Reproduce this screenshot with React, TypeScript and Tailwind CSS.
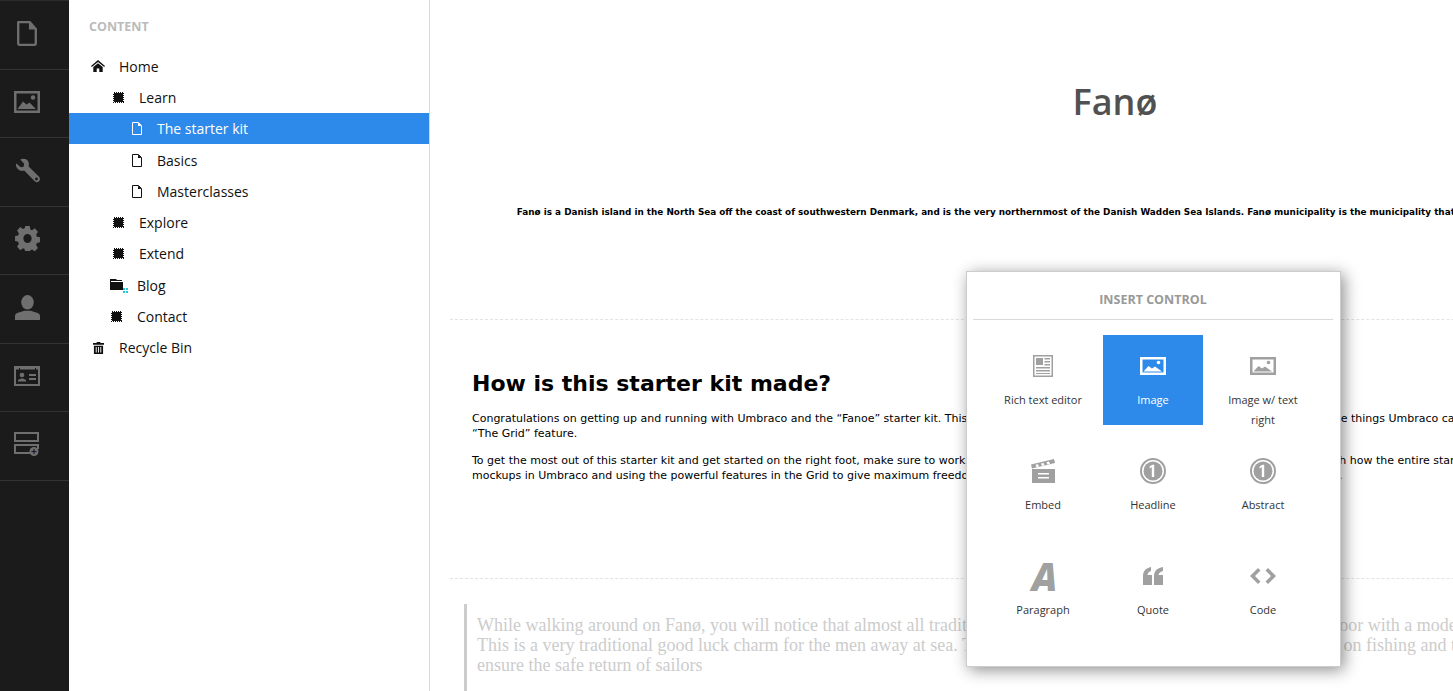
import React from "react";

type IP = { className?: string };

const FileIcon = ({ className }: IP) => (
  <svg viewBox="1.800 1.300 20.400 25.600" className={className} fill="none" stroke="currentColor" strokeWidth="2.400" strokeLinejoin="round">
    <path d="M3 2.500h12l6 7v15.200a1 1 0 0 1-1 1H4a1 1 0 0 1-1-1z" />
    <path d="M14 2v8h7z" fill="currentColor" stroke="none" />
  </svg>
);

const ImageIcon = ({ className }: IP) => (
  <svg viewBox="0 0 26 22" className={className}>
    <path fillRule="evenodd" fill="currentColor" d="M0 0h26v22H0zM2.500 2.500v17h21v-17z" />
    <circle cx="19" cy="6.500" r="2.200" fill="currentColor" />
    <path fill="currentColor" d="M3.500 18l5.500-7.500 3.500 3 3-2 6.500 6.500z" />
  </svg>
);

const ImageWideIcon = ({ className }: IP) => (
  <svg viewBox="0 0 26 18" className={className}>
    <path fillRule="evenodd" fill="currentColor" d="M0 0h26v18H0zM2.500 2.500v13h21v-13z" />
    <circle cx="18.500" cy="5.500" r="1.800" fill="currentColor" />
    <path fill="currentColor" d="M3.500 14.500l5-5.500 3.500 2.500 3-2 7 5z" />
  </svg>
);

const WrenchIcon = ({ className }: IP) => (
  <svg viewBox="0 0 26 26" className={className}>
    <path fill="currentColor" d="M1 5.500l5 4 3-.5 .5-3-4-4.500C8.500.2 12 .8 13.500 3c1.200 1.800 1.200 4 .5 5.500L25 19.500c1.300 1.400 1.200 3.500 0 4.700-1.300 1.300-3.300 1.200-4.500 0L9.500 13c-2 .8-4.500.4-6.200-1.200C1.500 10.200.7 7.700 1 5.500z" />
    <circle cx="22.300" cy="21.800" r="1.500" fill="#1b1b1b" />
  </svg>
);

const GearIcon = ({ className }: IP) => (
  <svg viewBox="0 0 24 24" className={className}>
    <path
      fill="currentColor"
      fillRule="evenodd"
      d="M9.600 0h4.800l.6 3.300 1.900.8 2.800-1.900 3.400 3.400-1.900 2.800.8 1.900 3.300.6v4.800l-3.300.6-.8 1.900 1.900 2.800-3.400 3.400-2.800-1.900-1.900.8-.6 3.300H9.600L9 22.100l-1.900-.8-2.800 1.900-3.400-3.400 1.900-2.800-.8-1.900L-1.300 14.500V9.700l3.300-.6.800-1.900-1.900-2.800 3.400-3.400 2.800 1.900 1.900-.8zM12 7.600a4.400 4.400 0 1 0 0 8.800 4.400 4.400 0 0 0 0-8.800z"
      transform="translate(1.200 0) scale(0.9 1)"
    />
  </svg>
);

const UserIcon = ({ className }: IP) => (
  <svg viewBox="0 0 24 24" className={className}>
    <ellipse cx="12" cy="7" rx="6" ry="7" fill="currentColor" />
    <path fill="currentColor" d="M0 24v-4c0-2 2-3 4.500-3.500L9 15h6l4.500 1.500C22 17 24 18 24 20v4z" />
  </svg>
);

const IdIcon = ({ className }: IP) => (
  <svg viewBox="0 0 26 20" className={className}>
    <path fill="currentColor" fillRule="evenodd" d="M0 0h26v20H0zM2 3.500V18h22V3.500h-2V2h-1v1.500H6V2H5v1.500z" />
    <circle cx="8" cy="9" r="2.300" fill="currentColor" />
    <path fill="currentColor" d="M4 15.500V14l3-1.500h2l3 1.500v1.500zM15 8h7v2h-7zM15 12h7v2h-7z" />
  </svg>
);

const LayoutAddIcon = ({ className }: IP) => (
  <svg viewBox="0 0 26 24" className={className}>
    <path fill="currentColor" fillRule="evenodd" d="M0 0h25v10H0zM2 2v6h21V2zM0 12h25v5h-2v-3H2v6h14v2H0z" />
    <circle cx="20" cy="19.500" r="4.500" fill="currentColor" />
    <path stroke="#1b1b2e" strokeWidth="1.200" d="M17.500 19.500h5M20 17v5" />
  </svg>
);

const HomeIcon = ({ className }: IP) => (
  <svg viewBox="0 0 14 12" className={className}>
    <path fill="currentColor" d="M7 0l7 6-.8 1L7 2 .8 7 0 6z" />
    <path fill="currentColor" d="M2.300 7L7 3.200 11.700 7v5H8.300V8.500H5.700V12H2.300z" />
  </svg>
);

const StampIcon = ({ className }: IP) => (
  <svg viewBox="0 0 11 11" className={className} shapeRendering="crispEdges">
    <rect x="0.500" y="0.500" width="10" height="10" fill="none" stroke="currentColor" strokeDasharray="1 1" />
    <rect x="1" y="1" width="9" height="9" fill="currentColor" />
  </svg>
);

const SmallFile = ({ className }: IP) => (
  <svg viewBox="0 0 10 13" className={className} fill="none" stroke="currentColor">
    <path d="M.5.500h6l3 3v9h-9z" />
    <path d="M6 .5v3.500h3.500z" fill="currentColor" stroke="none" />
  </svg>
);

const FolderIcon = ({ className }: IP) => (
  <svg viewBox="0 0 20 15" className={className}>
    <path fill="currentColor" d="M0 1h6l1 1h5v1H1v1h12v8H0z" />
    <path stroke="#22c7d6" strokeWidth="2" strokeDasharray="2 1" d="M13 11h6M13 14h6" />
  </svg>
);

const TrashIcon = ({ className }: IP) => (
  <svg viewBox="0 0 12 13" className={className}>
    <path fill="currentColor" d="M4 0h4v1h4v2H0V1h4z" />
    <path fill="currentColor" fillRule="evenodd" d="M1 4h10v9H1zM3 5.500v6h1v-6zM5.500 5.500v6h1v-6zM8 5.500v6h1v-6z" />
  </svg>
);

const RteIcon = ({ className }: IP) => (
  <svg viewBox="0 0 20 22" className={className}>
    <path fill="currentColor" fillRule="evenodd" d="M0 0h20v22H0zM1.500 1.500v19h17v-19z" />
    <path fill="currentColor" d="M3 3h7v7H3zM11.500 3H17v1.500h-5.500zM11.500 6H17v1.500h-5.500zM11.500 9H17v1.500h-5.500zM3 12h14v1.500H3zM3 15h14v1.500H3zM3 18h14v1H3z" />
  </svg>
);

const ClapIcon = ({ className }: IP) => (
  <svg viewBox="0 0 24 24" className={className}>
    <path fill="currentColor" d="M0 5.500L23 0l1 4L1 9.500z" />
    <path fill="#fff" d="M4.500 5.800l2.500-.6 1 2.400-2.500.6zM10 4.500l2.500-.6 1 2.400-2.500.6zM15.500 3.200l2.500-.6 1 2.400-2.500.6z" />
    <path fill="currentColor" d="M1 10h23v14H1z" />
    <path fill="#fff" d="M7 14h11v1.500H7zM7 18h11v1.500H7z" />
  </svg>
);

const CircleOne = ({ className }: IP) => (
  <svg viewBox="0 0 26 26" className={className}>
    <circle cx="13" cy="13" r="12" fill="none" stroke="currentColor" strokeWidth="2" />
    <circle cx="13" cy="13" r="9.500" fill="currentColor" />
    <path fill="#fff" d="M11.800 19V9.200L9.600 10.500V8.500l2.800-1.700h1.800V19z" />
  </svg>
);

const QuoteIcon = ({ className }: IP) => (
  <svg viewBox="0 0 20 18" className={className}>
    <path fill="currentColor" d="M0 18V9C0 4 3 1 8 0v4C5.500 5 4.500 6.500 4.500 8H9v10zM11 18V9c0-5 3-8 9-9v4c-3 1-4.500 2.500-4.500 4H20v10z" />
  </svg>
);

const CodeIcon = ({ className }: IP) => (
  <svg viewBox="0 0 26 16" className={className}>
    <path fill="currentColor" d="M8 0l2.500 2.500L5 8l5.500 5.500L8 16 0 8zM18 0l8 8-8 8-2.500-2.500L21 8l-5.500-5.500z" />
  </svg>
);

const rail = [
  { I: FileIcon, c: "w-[20px] h-[25px]" },
  { I: ImageIcon, c: "w-[26px] h-[22px]" },
  { I: WrenchIcon, c: "w-[25px] h-[25px]" },
  { I: GearIcon, c: "w-[25px] h-[25px]" },
  { I: UserIcon, c: "w-[25px] h-[25px]" },
  { I: IdIcon, c: "w-[26px] h-[20px]" },
  { I: LayoutAddIcon, c: "w-[26px] h-[24px]" },
];

const tree = [
  { t: "Home", I: HomeIcon, pl: "pl-[22px]", ic: "w-[14px] h-[12px]", gap: "w-[14px]" },
  { t: "Learn", I: StampIcon, pl: "pl-[44px]", ic: "w-[11px] h-[11px]", gap: "w-[15px]" },
  { t: "The starter kit", I: SmallFile, pl: "pl-[63px]", ic: "w-[10px] h-[13px]", gap: "w-[15px]", active: true },
  { t: "Basics", I: SmallFile, pl: "pl-[63px]", ic: "w-[10px] h-[13px]", gap: "w-[15px]" },
  { t: "Masterclasses", I: SmallFile, pl: "pl-[63px]", ic: "w-[10px] h-[13px]", gap: "w-[15px]" },
  { t: "Explore", I: StampIcon, pl: "pl-[44px]", ic: "w-[11px] h-[11px]", gap: "w-[15px]" },
  { t: "Extend", I: StampIcon, pl: "pl-[44px]", ic: "w-[11px] h-[11px]", gap: "w-[15px]" },
  { t: "Blog", I: FolderIcon, pl: "pl-[41px]", ic: "w-[20px] h-[15px]", gap: "w-[7px]" },
  { t: "Contact", I: StampIcon, pl: "pl-[42px]", ic: "w-[11px] h-[11px]", gap: "w-[15px]" },
  { t: "Recycle Bin", I: TrashIcon, pl: "pl-[24px]", ic: "w-[11px] h-[12px]", gap: "w-[15px]" },
];

const controls = [
  { t: "Rich text editor", I: RteIcon, c: "w-[20px] h-[22px]" },
  { t: "Image", I: ImageWideIcon, c: "w-[26px] h-[18px]", active: true },
  { t: "Image w/ text right", I: ImageWideIcon, c: "w-[26px] h-[18px]" },
  { t: "Embed", I: ClapIcon, c: "w-[24px] h-[24px]" },
  { t: "Headline", I: CircleOne, c: "w-[26px] h-[26px]" },
  { t: "Abstract", I: CircleOne, c: "w-[26px] h-[26px]" },
  { t: "Paragraph", I: null, c: "" },
  { t: "Quote", I: QuoteIcon, c: "w-[20px] h-[18px]" },
  { t: "Code", I: CodeIcon, c: "w-[26px] h-[16px]" },
];

export default function App() {
  return (
    <div className="relative flex h-[691px] w-[1453px] overflow-hidden bg-white font-['Open_Sans',sans-serif]">
      <nav className="w-[69px] shrink-0 bg-[#1b1b1b] text-[#6f6f6f] border-t border-[#2c2c2c]">
        {rail.map(({ I, c }, i) => (
          <div key={i} className="flex h-[68.5px] items-center justify-center border-b border-[#333333] pr-[15px] pb-[3px]">
            <I className={c} />
          </div>
        ))}
      </nav>

      <aside className="w-[361px] shrink-0 border-r border-[#d9d9d9]">
        <div className="pl-[20px] pt-[19px] h-[50.7px] text-[12.5px] leading-[16px] font-bold text-[#bbbbbb]">CONTENT</div>
        <ul>
          {tree.map(({ t, I, pl, ic, gap, active }) => (
            <li
              key={t}
              className={`flex h-[31.25px] items-center text-[14px] ${pl} ${active ? "bg-[#2e8aea] text-white" : "text-[#111111]"}`}
            >
              <span className="flex w-auto items-center">
                <I className={ic} />
              </span>
              <span className={`shrink-0 ${gap}`} />
              <span>{t}</span>
            </li>
          ))}
        </ul>
      </aside>

      <main className="min-w-0 flex-1 overflow-hidden">
        <div className="w-[1370px]">
          <h1 className="pt-[77px] text-center text-[36px] leading-[50px] font-semibold text-[#515151]">Fanø</h1>
          <p className="mt-[78px] whitespace-nowrap text-center font-['DejaVu_Sans',sans-serif] text-[8.85px] leading-[14px] font-bold text-black">
            Fanø is a Danish island in the North Sea off the coast of southwestern Denmark, and is the very northernmost of the Danish Wadden Sea Islands. Fanø municipality is the municipality that covers the entire island, and all of its major towns.
          </p>
          <div className="ml-[20px] mt-[100px] border-t border-dashed border-[#e3e3e3]" />
          <section className="pl-[42px] pt-[50px] font-['DejaVu_Sans',sans-serif] text-black">
            <h2 className="text-[22px] leading-[27px] font-bold">How is this starter kit made?</h2>
            <p className="mt-[14px] whitespace-nowrap text-[11px] leading-[15.4px]">
              Congratulations on getting up and running with Umbraco and the “Fanoe” starter kit. This starter kit is made to show off some of the really useful and so large things Umbraco can do, and especially
              <br />
              “The Grid” feature.
            </p>
            <p className="mt-[11px] whitespace-nowrap text-[11px] leading-[15.4px]">
              To get the most out of this starter kit and get started on the right foot, make sure to work your way through the many valuable tutorials that walk you through how the entire starter kit
              <br />
              mockups in Umbraco and using the powerful features in the Grid to give maximum freedom to the editors who will be working with the sites every single day.
            </p>
          </section>
          <div className="ml-[20px] mt-[94px] border-t border-dashed border-[#e3e3e3]" />
          <blockquote className="ml-[34px] mt-[25px] h-[90px] border-l-[3px] border-[#cccccc] pl-[10px] pt-[11px] font-['Liberation_Serif',serif] text-[18px] leading-[20px] whitespace-nowrap text-[#cccccc]">
            While walking around on Fanø, you will notice that almost all traditional houses on the island of Fanø all have a front door with a model ship
            <br />
            This is a very traditional good luck charm for the men away at sea. The whole local community on the island, depended on fishing and the sea
            <br />
            ensure the safe return of sailors
          </blockquote>
        </div>
      </main>

      <div className="absolute left-[966px] top-[271px] h-[396px] w-[375px] border border-[#cccccc] bg-white pl-[6px] pr-[7px] shadow-[3px_3px_15px_rgba(0,0,0,0.45)]">
        <div className="h-[48px] border-b border-[#d9d9d9] pt-[20px] text-center text-[12.5px] leading-[16px] font-bold text-[#999999]">INSERT CONTROL</div>
        <div className="ml-[20px] mt-[15px] grid grid-cols-[100px_100px_100px] gap-x-[10px] gap-y-[15px]">
          {controls.map(({ t, I, c, active }) => (
            <div
              key={t}
              className={`flex h-[90px] w-[100px] flex-col items-center text-center text-[11px] leading-[20px] ${active ? "bg-[#2e8aea] text-white" : "text-[#333333]"}`}
            >
              <div className={`flex h-[55px] w-full shrink-0 items-center justify-center pt-[7px] ${active ? "text-white" : "text-[#a0a0a0]"}`}>
                {I ? (
                  <I className={c} />
                ) : (
                  <span className="ml-[3px] text-[38px] leading-[38px] font-extrabold italic">A</span>
                )}
              </div>
              <div className="w-[90px] shrink-0">{t}</div>
            </div>
          ))}
        </div>
      </div>
    </div>
  );
}
